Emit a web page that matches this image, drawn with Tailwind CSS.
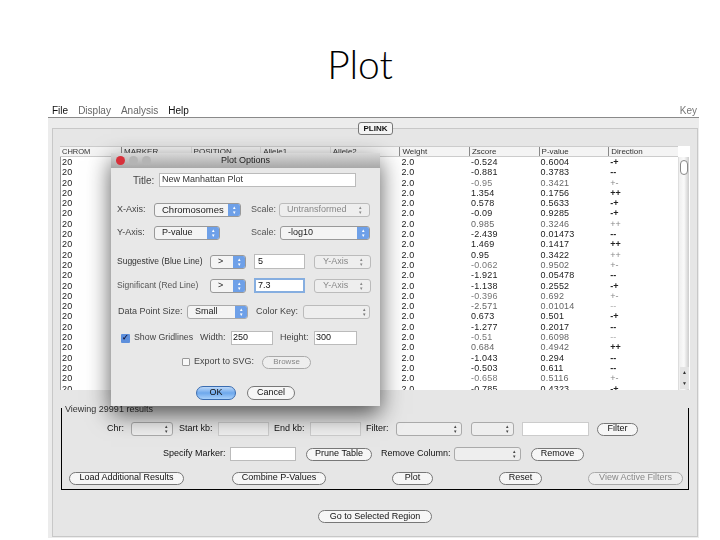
<!DOCTYPE html>
<html>
<head>
<meta charset="utf-8">
<script src="https://cdn.jsdelivr.net/npm/@tailwindcss/browser@4"></script>
</head>
<body class="bg-white">
<div class="relative w-[720px] h-[540px] overflow-hidden bg-white font-['Liberation_Sans',sans-serif] text-[9px] text-[#111]">
  <h1 class="h-[104px] pt-[38px] text-center font-['Lato',sans-serif] text-[39px] font-light leading-[52px] text-black">Plot</h1>

  <div class="ml-[48px] w-[651px] h-[434px] bg-[#ececec] blur-[0.4px]">
    <div class="flex h-[14px] items-center gap-[10px] border-b border-[#8a8a8a] bg-white pl-[4px] pr-[2px] text-[10px] leading-none">
      <span class="text-[#111]">File</span><span class="text-[#666]">Display</span><span class="text-[#666]">Analysis</span><span class="text-[#111]">Help</span><span class="ml-auto text-[#777]">Key</span>
    </div>

    <div class="relative ml-[4px] mt-[10px] h-[409px] w-[646px] border border-[#c8c8c8] bg-[#e6e6e6] pt-[17px]">
      <div class="absolute left-[305px] top-[-7px] flex h-[13px] w-[35px] items-center justify-center rounded-[3px] border border-[#777] bg-[#f4f4f4] text-[8px] font-bold">PLINK</div>

      <div class="ml-[7px] w-[630px] h-[244px] bg-white">
        <div class="grid h-[11px] w-[618px] grid-cols-[61px_repeat(8,69.6px)] border-y border-[#ccc] bg-[#f4f4f4] text-[8px] leading-[9px] text-[#333]">
          <span class="pl-[2px] text-[7.5px]">CHROM</span>
          <span class="border-l border-[#888] pl-[2px]">MARKER</span>
          <span class="border-l border-[#ddd] pl-[2px]">POSITION</span>
          <span class="border-l border-[#ddd] pl-[2px]">Allele1</span>
          <span class="border-l border-[#ddd] pl-[2px]">Allele2</span>
          <span class="border-l border-[#888] pl-[2px]">Weight</span>
          <span class="border-l border-[#888] pl-[2px]">Zscore</span>
          <span class="border-l border-[#888] pl-[2px]">P-value</span>
          <span class="border-l border-[#888] pl-[2px]">Direction</span>
        </div>
        <div class="flex h-[233px] overflow-hidden">
          <div class="grid w-[618px] grid-cols-[60px_repeat(8,69.6px)] whitespace-pre border-l border-[#999] text-[9px] leading-[10.3px] tracking-[0.2px] text-[#222]">
            <div class="pl-[1px]">20
20
20
20
20
20
20
20
20
20
20
20
20
20
20
20
20
20
20
20
20
20
20</div>
            <div></div><div></div><div></div><div></div>
            <div class="pl-[2px]">2.0
2.0
2.0
2.0
2.0
2.0
2.0
2.0
2.0
2.0
2.0
2.0
2.0
2.0
2.0
2.0
2.0
2.0
2.0
2.0
2.0
2.0
2.0</div>
            <div class="pl-[2px]">-0.524
-0.881
<span class="text-[#777]">-0.95</span>
1.354
0.578
-0.09
<span class="text-[#666]">0.985</span>
-2.439
1.469
0.95
<span class="text-[#777]">-0.062</span>
-1.921
-1.138
<span class="text-[#777]">-0.396</span>
<span class="text-[#666]">-2.571</span>
0.673
-1.277
<span class="text-[#777]">-0.51</span>
<span class="text-[#666]">0.684</span>
-1.043
-0.503
<span class="text-[#777]">-0.658</span>
-0.785</div>
            <div class="pl-[2px]">0.6004
0.3783
<span class="text-[#666]">0.3421</span>
0.1756
0.5633
0.9285
<span class="text-[#666]">0.3246</span>
0.01473
0.1417
0.3422
<span class="text-[#666]">0.9502</span>
0.05478
0.2552
<span class="text-[#666]">0.692</span>
<span class="text-[#666]">0.01014</span>
0.501
0.2017
<span class="text-[#666]">0.6098</span>
<span class="text-[#666]">0.4942</span>
0.294
0.611
<span class="text-[#666]">0.5116</span>
0.4323</div>
            <div class="pl-[2px] font-bold">-+
--
<span class="font-normal text-[#888]">+-</span>
++
-+
-+
<span class="font-normal text-[#888]">++</span>
--
++
<span class="font-normal text-[#888]">++</span>
<span class="font-normal text-[#888]">+-</span>
--
-+
<span class="font-normal text-[#888]">+-</span>
<span class="font-normal text-[#aaa]">--</span>
-+
--
<span class="font-normal text-[#aaa]">--</span>
++
--
--
<span class="font-normal text-[#888]">+-</span>
-+</div>
          </div>
          <div class="flex w-[11px] flex-col border-l border-[#ddd] bg-gradient-to-r from-[#eee] via-[#fafafa] to-[#ccc] pl-[1px]">
            <div class="mt-[3px] h-[15px] w-[8px] rounded-[4px] border border-[#888] bg-white"></div>
            <div class="flex-1"></div>
            <div class="mb-[1px] flex h-[22px] flex-col items-center justify-around bg-[#e4e4e4] text-[5px] leading-none text-[#333]"><span>▲</span><span>▼</span></div>
          </div>
        </div>
      </div>

      <div class="relative ml-[8px] mt-[18px] h-[82px] w-[628px] border-x border-b border-black">
        <span class="absolute left-[3px] top-[-5px] text-[#333]">Viewing 29991 results</span>
        <div class="absolute inset-x-0 top-[13px] flex h-[16px] items-center">
          <span class="ml-[45px] w-[24px]">Chr:</span>
          <div class="flex h-[14px] w-[42px] items-center justify-end rounded-[3px] border border-[#aaa] bg-[#eee] pr-[4px] text-[5px] leading-[5px] text-[#444]"><span class="whitespace-pre-line">▴
▾</span></div>
          <span class="ml-[6px] w-[39px]">Start kb:</span>
          <div class="h-[14px] w-[51px] border border-[#ccc] bg-[#efefef]"></div>
          <span class="ml-[5px] w-[36px]">End kb:</span>
          <div class="h-[14px] w-[51px] border border-[#ccc] bg-[#efefef]"></div>
          <span class="ml-[5px] w-[30px]">Filter:</span>
          <div class="flex h-[14px] w-[66px] items-center justify-end rounded-[3px] border border-[#aaa] bg-[#eee] pr-[4px] text-[5px] leading-[5px] text-[#444]"><span class="whitespace-pre-line">▴
▾</span></div>
          <div class="ml-[9px] flex h-[14px] w-[43px] items-center justify-end rounded-[3px] border border-[#aaa] bg-[#eee] pr-[4px] text-[5px] leading-[5px] text-[#444]"><span class="whitespace-pre-line">▴
▾</span></div>
          <div class="ml-[8px] h-[14px] w-[67px] border border-[#ccc] bg-white"></div>
          <div class="ml-[8px] flex h-[13px] w-[41px] items-center justify-center rounded-full border border-[#777] bg-[#f6f6f6]">Filter</div>
        </div>
        <div class="absolute inset-x-0 top-[38px] flex h-[16px] items-center">
          <span class="ml-[101px] w-[67px]">Specify Marker:</span>
          <div class="h-[14px] w-[66px] border border-[#bbb] bg-white"></div>
          <div class="ml-[10px] flex h-[13px] w-[66px] items-center justify-center rounded-full border border-[#777] bg-[#f6f6f6]">Prune Table</div>
          <span class="ml-[9px] w-[73px]">Remove Column:</span>
          <div class="flex h-[14px] w-[67px] items-center justify-end rounded-[3px] border border-[#aaa] bg-[#eee] pr-[4px] text-[5px] leading-[5px] text-[#444]"><span class="whitespace-pre-line">▴
▾</span></div>
          <div class="ml-[10px] flex h-[13px] w-[53px] items-center justify-center rounded-full border border-[#777] bg-[#f6f6f6]">Remove</div>
        </div>
        <div class="absolute inset-x-0 top-[62px] flex h-[16px] items-center">
          <div class="ml-[7px] flex h-[13px] w-[115px] items-center justify-center rounded-full border border-[#777] bg-[#f6f6f6]">Load Additional Results</div>
          <div class="ml-[48px] flex h-[13px] w-[94px] items-center justify-center rounded-full border border-[#777] bg-[#f6f6f6]">Combine P-Values</div>
          <div class="ml-[66px] flex h-[13px] w-[41px] items-center justify-center rounded-full border border-[#777] bg-[#f6f6f6]">Plot</div>
          <div class="ml-[66px] flex h-[13px] w-[43px] items-center justify-center rounded-full border border-[#777] bg-[#f6f6f6]">Reset</div>
          <div class="ml-[46px] flex h-[13px] w-[95px] items-center justify-center rounded-full border border-[#aaa] bg-[#eee] text-[#888]">View Active Filters</div>
        </div>
      </div>

      <div class="ml-[265px] mt-[20px] flex h-[13px] w-[114px] items-center justify-center rounded-full border border-[#777] bg-[#f6f6f6] font-medium">Go to Selected Region</div>
    </div>
  </div>

  <!-- Plot Options dialog -->
  <div class="absolute left-[111px] top-[153px] h-[253px] w-[269px] bg-[#e8e8e8] shadow-[0_8px_22px_rgba(0,0,0,0.65)] blur-[0.4px]">
    <div class="relative flex h-[15px] items-center justify-center bg-gradient-to-b from-[#d8d8d8] to-[#a8a8a8] pt-[1px] text-[9px] text-[#222]">
      Plot Options
      <div class="absolute left-[5px] top-[3px] flex gap-[4px]">
        <span class="h-[9px] w-[9px] rounded-full bg-[#d8303a]"></span>
        <span class="h-[9px] w-[9px] rounded-full bg-[#b4b4b4]"></span>
        <span class="h-[9px] w-[9px] rounded-full bg-[#b4b4b4]"></span>
      </div>
    </div>

    <div class="ml-[22px] mt-[5px] flex h-[14px] items-center">
      <span class="w-[26px] text-[10px] text-[#444]">Title:</span>
      <div class="flex h-[14px] w-[197px] items-center border border-[#bbb] bg-white pl-[2px] text-[#333]">New Manhattan Plot</div>
    </div>

    <div class="ml-[6px] mt-[16px] flex h-[14px] items-center">
      <span class="w-[37px] text-[#444]">X-Axis:</span>
      <div class="flex h-[14px] w-[87px] items-center rounded-[3px] border border-[#999] bg-[#f4f4f4] pl-[7px] text-[9.5px] text-[#222]"><span class="flex-1">Chromosomes</span><span class="flex h-[12px] w-[12px] items-center justify-center rounded-r-[2px] bg-[#6ea0e8] text-[5px] leading-[5px] text-white whitespace-pre-line">▴
▾</span></div>
      <span class="ml-[10px] w-[28px] text-[#555]">Scale:</span>
      <div class="flex h-[14px] w-[91px] items-center rounded-[3px] border border-[#bbb] bg-[#eee] pl-[7px] text-[#888]"><span class="flex-1">Untransformed</span><span class="w-[10px] text-[5px] leading-[5px] whitespace-pre-line">▴
▾</span></div>
    </div>

    <div class="ml-[6px] mt-[9px] flex h-[14px] items-center">
      <span class="w-[37px] text-[#444]">Y-Axis:</span>
      <div class="flex h-[14px] w-[66px] items-center rounded-[3px] border border-[#999] bg-[#f4f4f4] pl-[7px] text-[#222]"><span class="flex-1">P-value</span><span class="flex h-[12px] w-[12px] items-center justify-center rounded-r-[2px] bg-[#6ea0e8] text-[5px] leading-[5px] text-white whitespace-pre-line">▴
▾</span></div>
      <span class="ml-[31px] w-[29px] text-[#555]">Scale:</span>
      <div class="flex h-[14px] w-[90px] items-center rounded-[3px] border border-[#999] bg-[#f4f4f4] pl-[7px] text-[#222]"><span class="flex-1">-log10</span><span class="flex h-[12px] w-[12px] items-center justify-center rounded-r-[2px] bg-[#6ea0e8] text-[5px] leading-[5px] text-white whitespace-pre-line">▴
▾</span></div>
    </div>

    <div class="ml-[6px] mt-[14px] flex h-[15px] items-center">
      <span class="w-[93px] text-[8.5px] text-[#333]">Suggestive (Blue Line)</span>
      <div class="flex h-[14px] w-[36px] items-center rounded-[3px] border border-[#999] bg-[#f4f4f4] pl-[7px] text-[#222]"><span class="flex-1">&gt;</span><span class="flex h-[12px] w-[12px] items-center justify-center rounded-r-[2px] bg-[#6ea0e8] text-[5px] leading-[5px] text-white whitespace-pre-line">▴
▾</span></div>
      <div class="ml-[8px] flex h-[15px] w-[51px] items-center border border-[#bbb] bg-white pl-[3px]">5</div>
      <div class="ml-[9px] flex h-[14px] w-[57px] items-center rounded-[3px] border border-[#bbb] bg-[#eee] pl-[8px] text-[#888]"><span class="flex-1">Y-Axis</span><span class="w-[10px] text-[5px] leading-[5px] whitespace-pre-line">▴
▾</span></div>
    </div>

    <div class="ml-[6px] mt-[9px] flex h-[15px] items-center">
      <span class="w-[93px] text-[8.5px] text-[#555]">Significant (Red Line)</span>
      <div class="flex h-[14px] w-[36px] items-center rounded-[3px] border border-[#999] bg-[#f4f4f4] pl-[7px] text-[#222]"><span class="flex-1">&gt;</span><span class="flex h-[12px] w-[12px] items-center justify-center rounded-r-[2px] bg-[#6ea0e8] text-[5px] leading-[5px] text-white whitespace-pre-line">▴
▾</span></div>
      <div class="ml-[8px] flex h-[15px] w-[51px] items-center border-2 border-[#86aee0] bg-white pl-[2px]">7.3</div>
      <div class="ml-[9px] flex h-[14px] w-[57px] items-center rounded-[3px] border border-[#bbb] bg-[#eee] pl-[8px] text-[#888]"><span class="flex-1">Y-Axis</span><span class="w-[10px] text-[5px] leading-[5px] whitespace-pre-line">▴
▾</span></div>
    </div>

    <div class="ml-[7px] mt-[12px] flex h-[14px] items-center">
      <span class="w-[69px] text-[#444]">Data Point Size:</span>
      <div class="flex h-[14px] w-[61px] items-center rounded-[3px] border border-[#aaa] bg-[#f4f4f4] pl-[7px] text-[#222]"><span class="flex-1">Small</span><span class="flex h-[12px] w-[12px] items-center justify-center rounded-r-[2px] bg-[#6ea0e8] text-[5px] leading-[5px] text-white whitespace-pre-line">▴
▾</span></div>
      <span class="ml-[8px] w-[47px] text-[#444]">Color Key:</span>
      <div class="flex h-[14px] w-[67px] items-center justify-end rounded-[3px] border border-[#bbb] bg-[#eee] pr-[3px] text-[5px] leading-[5px] text-[#777] whitespace-pre-line">▴
▾</div>
    </div>

    <div class="ml-[10px] mt-[12px] flex h-[14px] items-center">
      <span class="flex h-[9px] w-[9px] items-center justify-center rounded-[1px] bg-[#5d8fdc] text-[8px] leading-none font-bold text-[#113]">✓</span>
      <span class="ml-[4px] w-[66px] text-[8.8px] text-[#444]">Show Gridlines</span>
      <span class="w-[31px] text-[#444]">Width:</span>
      <div class="flex h-[14px] w-[42px] items-center border border-[#bbb] bg-white pl-[1px]">250</div>
      <span class="ml-[7px] w-[34px] text-[#444]">Height:</span>
      <div class="flex h-[14px] w-[43px] items-center border border-[#bbb] bg-white pl-[1px]">300</div>
    </div>

    <div class="ml-[71px] mt-[10px] flex h-[14px] items-center">
      <span class="h-[8px] w-[8px] rounded-[1px] border border-[#999] bg-[#f8f8f8]"></span>
      <span class="ml-[4px] w-[68px] text-[#444]">Export to SVG:</span>
      <div class="flex h-[13px] w-[49px] items-center justify-center rounded-full border border-[#aaa] bg-[#eee] text-[8px] text-[#888]">Browse</div>
    </div>

    <div class="ml-[85px] mt-[17px] flex h-[14px] items-center gap-[11px]">
      <div class="flex h-[14px] w-[40px] items-center justify-center rounded-full border border-[#3a6cb0] bg-gradient-to-b from-[#bcd8f8] via-[#6ea8ec] to-[#a8d0fa] text-[#111]">OK</div>
      <div class="flex h-[14px] w-[48px] items-center justify-center rounded-full border border-[#777] bg-[#f6f6f6] text-[#111]">Cancel</div>
    </div>
  </div>
</div>
</body>
</html>
